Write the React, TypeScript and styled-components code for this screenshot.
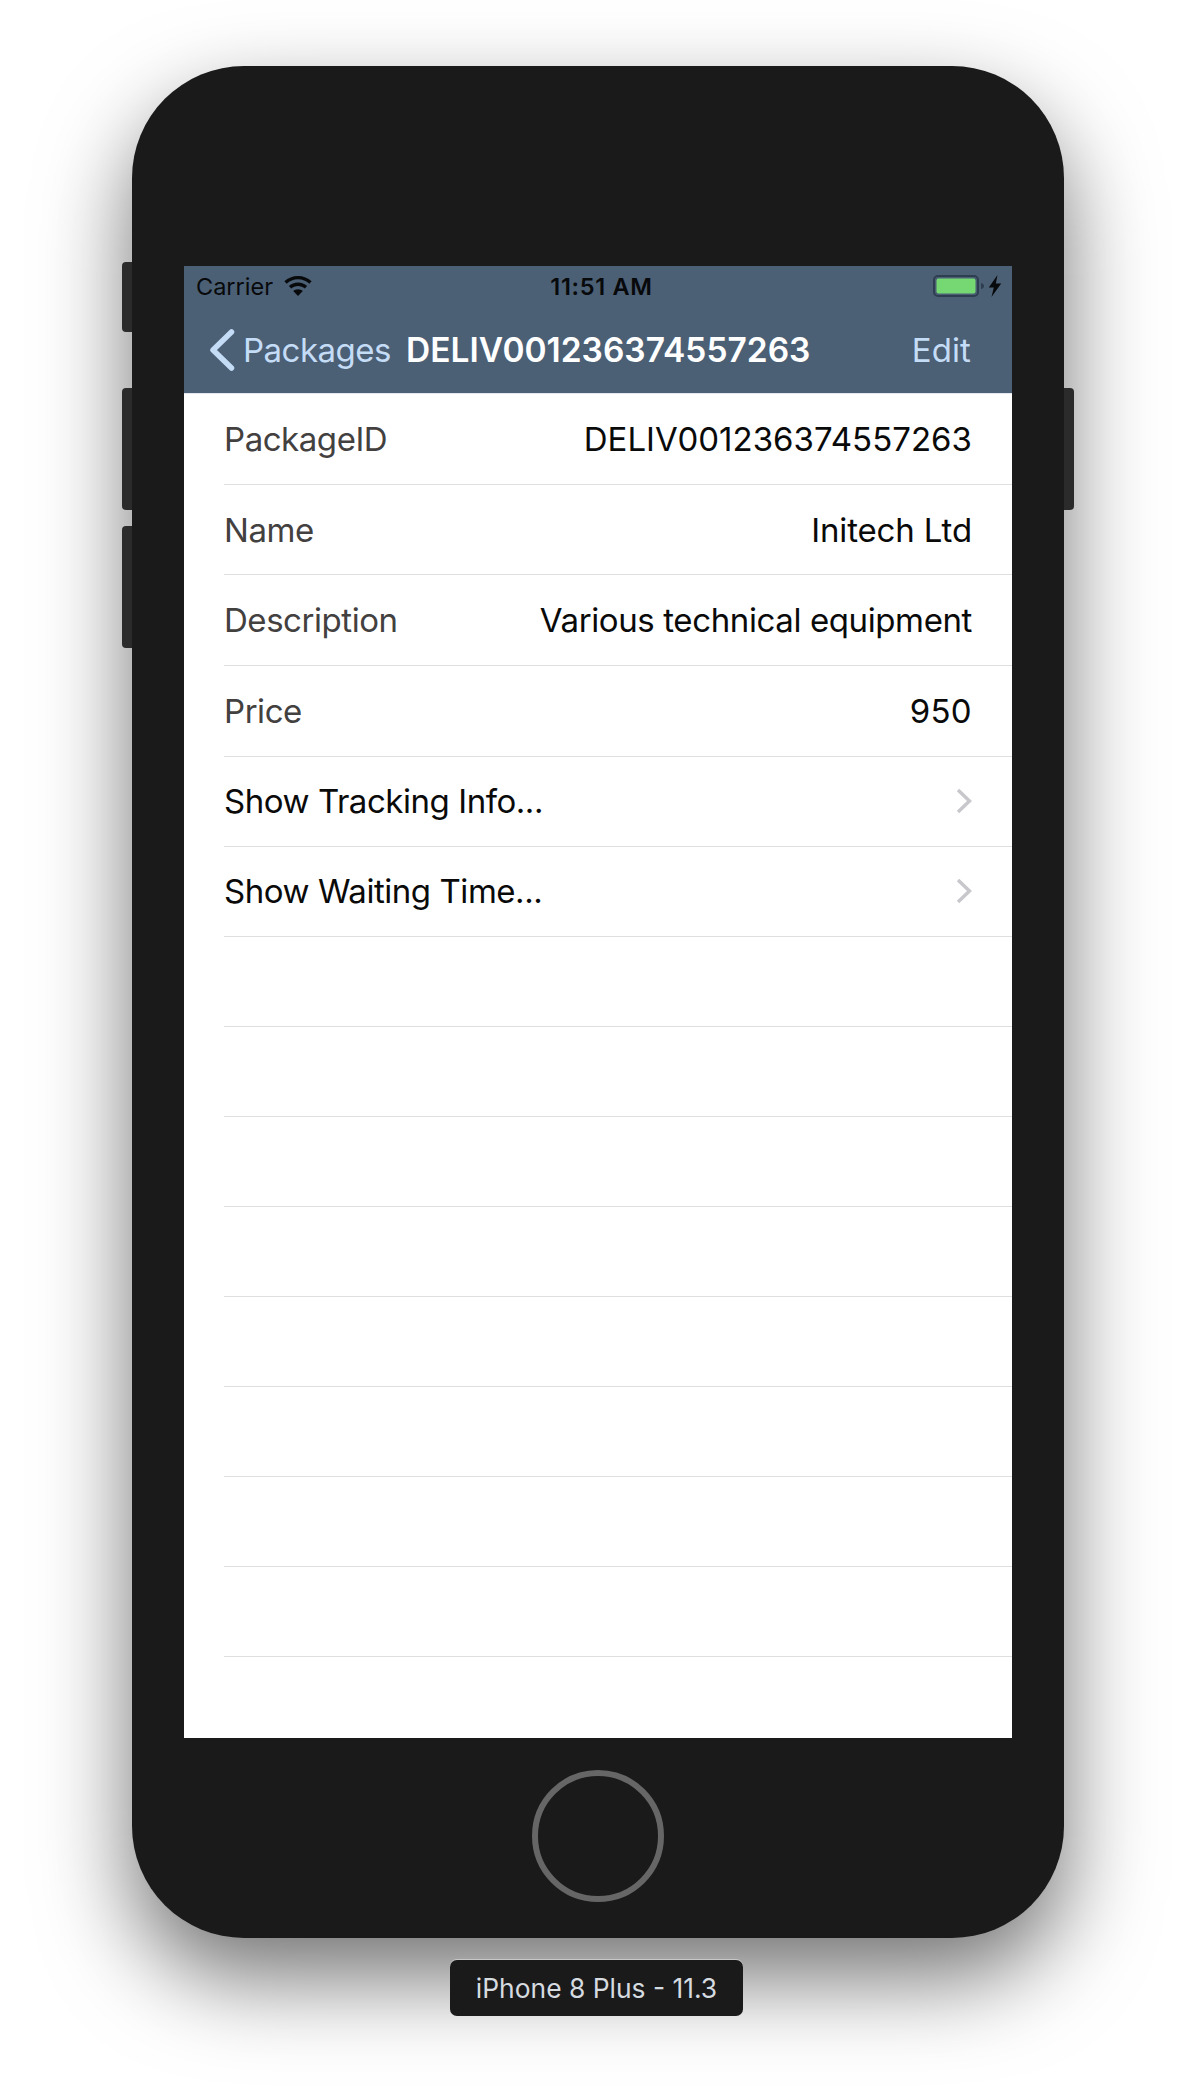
import React from "react"
import styled, { createGlobalStyle } from "styled-components"

const GlobalStyle = createGlobalStyle`
    html, body {
        margin: 0;
        padding: 0;
        background: #fff;
        font-family: Inter, "Liberation Sans", sans-serif;
    }
`

const Page = styled.div`
    width: 1196px;
    height: 2100px;
    padding-top: 66px;
    box-sizing: border-box;
    display: flex;
    flex-direction: column;
    align-items: center;
    overflow: hidden;
`

const Phone = styled.div`
    position: relative;
    width: 932px;
    height: 1872px;
    box-sizing: border-box;
    padding: 200px 52px 0;
    background: #1a1a1a;
    border-radius: 112px;
    box-shadow: 0 40px 90px rgba(0, 0, 0, 0.55);
`

const SideButton = styled.div<{ $side: "left" | "right"; $top: number; $height: number }>`
    position: absolute;
    ${p => p.$side}: -10px;
    top: ${p => p.$top}px;
    width: 10px;
    height: ${p => p.$height}px;
    background: #2b2b2b;
    border-radius: ${p => (p.$side === "left" ? "4px 0 0 4px" : "0 4px 4px 0")};
`

const Screen = styled.div`
    width: 828px;
    height: 1472px;
    background: #fff;
    overflow: hidden;
`

const NavHeader = styled.div`
    height: 128px;
    background: #4b5f75;
    border-bottom: 1px solid #e4e8ec;
    box-sizing: border-box;
`

const StatusBar = styled.div`
    height: 40px;
    padding: 0 10px 0 12px;
    display: flex;
    align-items: center;
    font-size: 23.5px;
    color: #08090a;
`

const StatusSide = styled.div<{ $end?: boolean }>`
    flex: 1;
    display: flex;
    align-items: center;
    justify-content: ${p => (p.$end ? "flex-end" : "flex-start")};
    gap: ${p => (p.$end ? 3 : 11)}px;
`

const StatusTime = styled.div`
    font-weight: 600;
    letter-spacing: 0.7px;
    margin-left: 5px;
`

const NavBar = styled.div`
    height: 87px;
    display: flex;
    align-items: center;
    padding: 0 41px 6px 25px;
`

const BackGroup = styled.div`
    display: flex;
    align-items: center;
    gap: 8px;
    color: #c4dcf6;
    font-size: 33px;
    font-weight: 370;
    letter-spacing: -0.5px;
`

const NavTitle = styled.div`
    margin-left: 15px;
    flex: 1;
    color: #fff;
    font-size: 33.5px;
    font-weight: 600;
`

const NavAction = styled.div`
    color: #c4dcf6;
    font-size: 33px;
    font-weight: 370;
    letter-spacing: 0.1px;
`

const List = styled.div`
    display: flex;
    flex-direction: column;
`

const Row = styled.div<{ $tall?: boolean }>`
    height: ${p => (p.$tall ? 90.7 : 90)}px;
    box-sizing: border-box;
    margin-left: 40px;
    padding-right: 40px;
    border-bottom: 1px solid #dfdfe0;
    display: flex;
    align-items: center;
    justify-content: space-between;
    font-size: 33px;
    font-weight: 370;
`

const Label = styled.span<{ $action?: boolean }>`
    color: ${p => (p.$action ? "#0a0a0a" : "#434040")};
    letter-spacing: -0.45px;
`

const Value = styled.span<{ $spacing: number }>`
    color: #0a0a0a;
    letter-spacing: ${p => p.$spacing}px;
`

const HomeButton = styled.div`
    width: 132px;
    height: 132px;
    box-sizing: border-box;
    margin: 32px auto 0;
    border: 6px solid #666;
    border-radius: 50%;
`

const DeviceLabel = styled.div`
    margin-top: 22px;
    width: 293px;
    height: 56px;
    margin-right: 3px;
    box-sizing: border-box;
    display: flex;
    align-items: center;
    justify-content: center;
    background: #1a1a1a;
    border-radius: 7px;
    box-shadow: 0 -1px 0 #c8c8c8;
    color: #d6dbe0;
    font-size: 26.4px;
    position: relative;
`

function WifiIcon() {
    return (
        <svg width="28" height="20" viewBox="0 0 28 20">
            <path fill="#08090a" d="M14 0C8.7 0 4 2 .4 5.3l2.3 2.5C5.700 5 9.600 3.300 14 3.300S22.300 5 25.300 7.800l2.300-2.500C24 2 19.300 0 14 0Z" />
            <path fill="#08090a" d="M14 6.600c-3.500 0-6.700 1.300-9.100 3.500l2.300 2.500C9 11 11.400 10 14 10s5 1 6.800 2.600l2.300-2.500c-2.400-2.200-5.600-3.500-9.100-3.500Z" />
            <path fill="#08090a" d="M14 13.300c-1.900 0-3.500.7-4.800 1.800L14 20l4.800-4.900c-1.300-1.100-2.900-1.800-4.800-1.800Z" />
        </svg>
    )
}

function BatteryIcon() {
    return (
        <svg width="52" height="24" viewBox="0 0 52 24">
            <rect x="1" y="2" width="44" height="20" rx="4" fill="none" stroke="#2e3e50" strokeWidth="2" />
            <rect x="3.500" y="4.500" width="39" height="15" rx="2" fill="#75d873" />
            <path d="M48 9c2 .5 3 1.500 3 3s-1 2.500-3 3Z" fill="#2e3e50" />
        </svg>
    )
}

function BoltIcon() {
    return (
        <svg width="14" height="22" viewBox="0 0 14 22">
            <path fill="#08090a" d="M9.500 0 .8 12.500h5L3.500 22 13.200 8.500H7.800Z" />
        </svg>
    )
}

function BackChevron() {
    return (
        <svg width="26" height="42" viewBox="0 0 26 42">
            <path d="M22.500 3 4 21l18.500 18" fill="none" stroke="#c4dcf6" strokeWidth="5.500" strokeLinecap="round" strokeLinejoin="round" />
        </svg>
    )
}

function RowChevron() {
    return (
        <svg width="16" height="26" viewBox="0 0 16 26">
            <path d="M2 2l11.500 11L2 24" fill="none" stroke="#c8c8cc" strokeWidth="3.500" />
        </svg>
    )
}

const details = [
    { label: "PackageID", value: "DELIV001236374557263", spacing: 0.02 },
    { label: "Name", value: "Initech Ltd", spacing: -0.14 },
    { label: "Description", value: "Various technical equipment", spacing: -0.39 },
    { label: "Price", value: "950", spacing: 0.3 },
]

const actions = ["Show Tracking Info...", "Show Waiting Time..."]

const emptyRows = [0, 1, 2, 3, 4, 5, 6, 7]

export default function App() {
    return <Page>
        <GlobalStyle />
        <Phone>
            <SideButton $side="left" $top={196} $height={70} />
            <SideButton $side="left" $top={322} $height={122} />
            <SideButton $side="left" $top={460} $height={122} />
            <SideButton $side="right" $top={322} $height={122} />
            <Screen>
                <NavHeader>
                    <StatusBar>
                        <StatusSide>
                            <span>Carrier</span>
                            <WifiIcon />
                        </StatusSide>
                        <StatusTime>11:51 AM</StatusTime>
                        <StatusSide $end>
                            <BatteryIcon />
                            <BoltIcon />
                        </StatusSide>
                    </StatusBar>
                    <NavBar>
                        <BackGroup>
                            <BackChevron />
                            <span>Packages</span>
                        </BackGroup>
                        <NavTitle>DELIV001236374557263</NavTitle>
                        <NavAction>Edit</NavAction>
                    </NavBar>
                </NavHeader>
                <List>
                    {details.map(d => (
                        <Row key={d.label} $tall>
                            <Label>{d.label}</Label>
                            <Value $spacing={d.spacing}>{d.value}</Value>
                        </Row>
                    ))}
                    {actions.map(action => (
                        <Row key={action}>
                            <Label $action>{action}</Label>
                            <RowChevron />
                        </Row>
                    ))}
                    {emptyRows.map(i => <Row key={i} />)}
                </List>
            </Screen>
            <HomeButton />
        </Phone>
        <DeviceLabel>iPhone 8 Plus - 11.3</DeviceLabel>
    </Page>
}
